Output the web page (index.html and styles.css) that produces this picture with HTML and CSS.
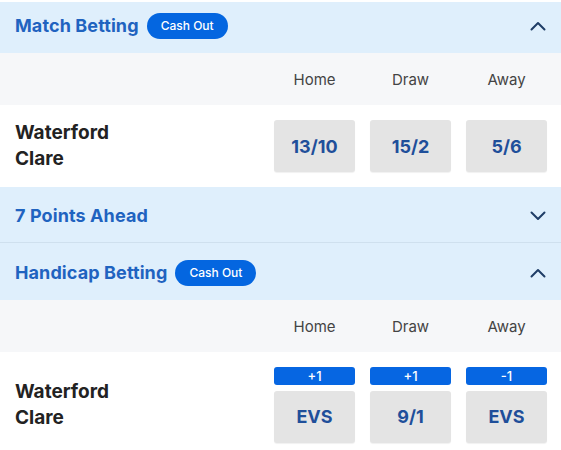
FILE: index.html
```html
<!DOCTYPE html>
<html>
<head>
<meta charset="utf-8">
<link rel="stylesheet" href="styles.css">
</head>
<body>
<div class="page">
  <section class="market">
    <div class="market-head first">
      <div class="title-wrap">
        <span class="title">Match Betting</span>
        <span class="cashout">Cash Out</span>
      </div>
      <svg class="chev" viewBox="0 0 16 10" width="16" height="10"><path d="M1.5 8.5 L8 2 L14.5 8.5" fill="none" stroke="#1f3d66" stroke-width="2" stroke-linecap="round" stroke-linejoin="round"/></svg>
    </div>
    <div class="col-head">
      <span class="spacer"></span>
      <span class="col">Home</span>
      <span class="col">Draw</span>
      <span class="col">Away</span>
    </div>
    <div class="row">
      <div class="teams"><div>Waterford</div><div>Clare</div></div>
      <div class="cell"><button class="odds">13/10</button></div>
      <div class="cell"><button class="odds">15/2</button></div>
      <div class="cell"><button class="odds">5/6</button></div>
    </div>
  </section>
  <section class="market">
    <div class="market-head collapsed">
      <div class="title-wrap">
        <span class="title">7 Points Ahead</span>
      </div>
      <svg class="chev" viewBox="0 0 16 10" width="16" height="10"><path d="M1.5 1.5 L8 8 L14.5 1.5" fill="none" stroke="#1f3d66" stroke-width="2" stroke-linecap="round" stroke-linejoin="round"/></svg>
    </div>
  </section>
  <section class="market">
    <div class="market-head third">
      <div class="title-wrap">
        <span class="title">Handicap Betting</span>
        <span class="cashout">Cash Out</span>
      </div>
      <svg class="chev" viewBox="0 0 16 10" width="16" height="10"><path d="M1.5 8.5 L8 2 L14.5 8.5" fill="none" stroke="#1f3d66" stroke-width="2" stroke-linecap="round" stroke-linejoin="round"/></svg>
    </div>
    <div class="col-head">
      <span class="spacer"></span>
      <span class="col">Home</span>
      <span class="col">Draw</span>
      <span class="col">Away</span>
    </div>
    <div class="row hcap">
      <div class="teams"><div>Waterford</div><div>Clare</div></div>
      <div class="cell"><span class="line">+1</span><button class="odds">EVS</button></div>
      <div class="cell"><span class="line">+1</span><button class="odds">9/1</button></div>
      <div class="cell"><span class="line">-1</span><button class="odds">EVS</button></div>
    </div>
  </section>
</div>
</body>
</html>
```

FILE: styles.css
```css
* { box-sizing: border-box; }
html, body { margin: 0; padding: 0; background: #ffffff; }
body {
  font-family: Inter, "Noto Sans", "Liberation Sans", sans-serif;
  width: 561px;
  height: 450px;
  overflow: hidden;
}
.page { padding-top: 2px; }
.market-head {
  display: flex;
  align-items: center;
  justify-content: space-between;
  background: #dfeffc;
  padding: 0 15px 0 15px;
  height: 51px;
}
.market-head.first { padding-bottom: 4px; }
.market-head.collapsed { height: 56px; border-bottom: 1px solid #cfe0ee; padding-top: 2px; }
.market-head.third { height: 57px; padding-top: 2px; }
.title-wrap { display: flex; align-items: center; gap: 8px; }
.title {
  font-size: 18px;
  font-weight: 700;
  color: #1f63c0;
  letter-spacing: 0.1px;
}
.cashout {
  background: #0466e0;
  color: #ffffff;
  font-size: 12px;
  font-weight: 500;
  height: 26px;
  line-height: 26px;
  padding: 0 14px;
  border-radius: 13px;
}
.col-head {
  display: grid;
  grid-template-columns: 1fr 81px 81px 81px;
  column-gap: 15px;
  padding: 0 14px 0 15px;
  height: 52px;
  align-items: center;
  background: #f6f7f9;
}
.col {
  text-align: center;
  font-size: 15px;
  color: #444444;
}
.row {
  display: grid;
  grid-template-columns: 1fr 81px 81px 81px;
  column-gap: 15px;
  padding: 0 14px 0 15px;
  height: 82px;
  align-items: center;
  background: #ffffff;
}
.row.hcap { height: 98px; padding-top: 7px; }
.teams {
  font-size: 19px;
  font-weight: 700;
  color: #222222;
  line-height: 26px;
}
.cell { display: flex; flex-direction: column; gap: 6px; }
.odds {
  width: 81px;
  height: 52px;
  border: none;
  border-radius: 3px;
  background: #e4e4e4;
  box-shadow: 0 1px 1px rgba(0,0,0,0.06);
  font-family: inherit;
  font-size: 18px;
  font-weight: 700;
  color: #1f4f9a;
  padding: 0;
}
.line {
  display: block;
  height: 18px;
  line-height: 18px;
  background: #0666e2;
  color: #ffffff;
  font-size: 13px;
  font-weight: 500;
  text-align: center;
  border-radius: 3px;
}
```
